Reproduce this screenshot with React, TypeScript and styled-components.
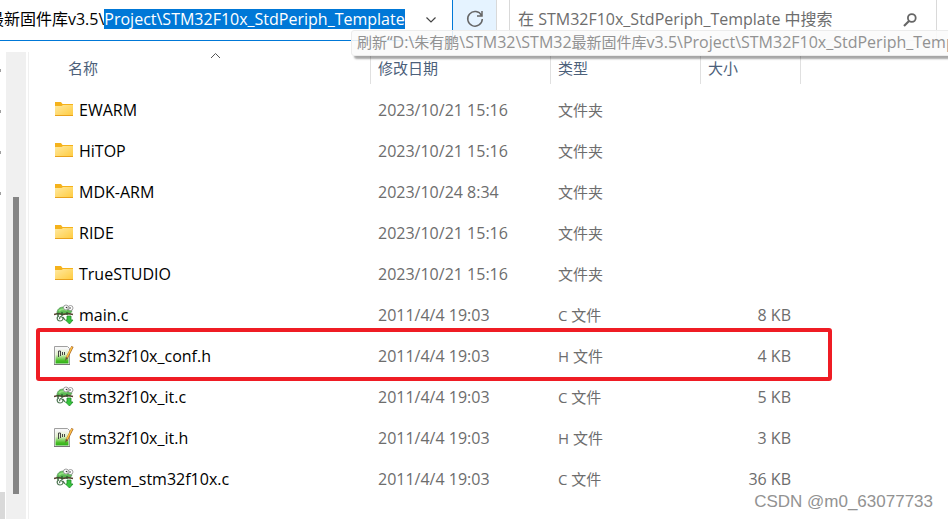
import React, { useLayoutEffect, useRef } from "react";
import styled, { createGlobalStyle } from "styled-components";

const GlobalStyle = createGlobalStyle`
  * { box-sizing: border-box; }
  body {
    margin: 0;
    background: #ffffff;
    overflow: hidden;
    font-family: "Open Sans", "Noto Sans CJK SC", sans-serif;
    font-size: 15px;
    line-height: 20px;
    color: #6d6d6d;
  }
`;

const Window = styled.div`
  position: relative;
  display: flex;
  flex-direction: column;
  min-height: 100vh;
  overflow: hidden;
`;

const Toolbar = styled.header`
  display: flex;
  height: 41px;
`;

const AddressBar = styled.div`
  display: flex;
  flex: 0 0 453px;
  border-right: 1px solid #0078d7;
  border-bottom: 1px solid #0078d7;
`;

const AddressInput = styled.input`
  flex: 0 0 405px;
  min-width: 0;
  padding: 0 0 2px;
  border: 0;
  outline: 0;
  background: transparent;
  color: #000000;
  font: inherit;
  font-size: 16px;
  &::selection { background: #0078d7; color: #ffffff; }
`;

const IconButton = styled.button`
  display: flex;
  align-items: center;
  justify-content: center;
  padding: 0;
  border: 0;
  background: transparent;
  color: #444444;
`;

const HistoryButton = styled(IconButton)`
  flex: 1;
  padding-left: 4px;
`;

const RefreshButton = styled(IconButton)`
  flex: 0 0 44px;
  padding-bottom: 4px;
  border-right: 1px solid #d9d9d9;
  background: #e5f3ff;
`;

const SearchBox = styled.form`
  display: flex;
  flex: 1;
  margin: 0 11px 0 12px;
  border: 1px solid #d9d9d9;
  border-top: 0;
`;

const SearchInput = styled.input`
  flex: 1;
  min-width: 0;
  padding: 0 8px 2px;
  border: 0;
  outline: 0;
  background: transparent;
  font: inherit;
  font-size: 16px;
  &::placeholder { color: #6d6d6d; opacity: 1; }
`;

const SearchButton = styled(IconButton)`
  flex: 0 0 52px;
`;

const Tooltip = styled.div`
  position: absolute;
  z-index: 2;
  top: 30px;
  left: 351px;
  padding: 1px 5px 3px;
  border: 1px solid #ececec;
  border-radius: 3px;
  background: rgba(250, 250, 250, 0.88);
  box-shadow: 3px 3px 2px rgba(0, 0, 0, 0.35);
  color: #929292;
  font-size: 16px;
  white-space: nowrap;
`;

const Han = styled.span`
  font-size: 15px;
`;

const Body = styled.div`
  display: flex;
  flex: 1;
  padding-top: 11px;
`;

const NavPane = styled.nav`
  display: flex;
  flex-direction: column;
  flex: 0 0 6px;
  gap: 38px;
  padding-top: 17px;
`;

const NavMark = styled.span`
  width: 1px;
  height: 3px;
  background: #a0a0a0;
`;

const NavItemEdge = styled.span`
  width: 5px;
  height: 27px;
  margin-top: auto;
  background: #d9d9d9;
`;

const ScrollTrack = styled.div`
  flex: 0 0 20px;
  padding: 145px 7px 25px;
  background: #f0f0f0;
`;

const ScrollThumb = styled.div`
  height: 100%;
  background: #858585;
`;

const FilePane = styled.main`
  flex: 1;
  min-width: 0;
  margin-left: 2px;
  border-left: 1px solid #f0f0f0;
`;

const FileTable = styled.table`
  width: 772px;
  table-layout: fixed;
  border-collapse: separate;
  border-spacing: 0;
`;

const Column = styled.col<{ $width?: number }>`
  width: ${({ $width }) => ($width ? `${$width}px` : "auto")};
`;

const HeaderCell = styled.th`
  height: 38px;
  padding: 0 0 6px;
  text-align: left;
  vertical-align: top;
  font-weight: 400;
  color: #4c607a;
`;

const HeaderLabel = styled.div<{ $first?: boolean }>`
  position: relative;
  height: 32px;
  padding: 6px 0 0 ${({ $first }) => ($first ? 39 : 7)}px;
  border-right: 1px solid #e0e0e0;
`;

const SortMark = styled.svg`
  position: absolute;
  top: 0;
  left: 181px;
`;

const Row = styled.tr`
  position: relative;
`;

const Marker = styled.span`
  position: absolute;
  top: -8px;
  left: 7px;
  width: 796px;
  height: 53px;
  border: 4px solid #ef1c24;
  border-radius: 3px;
  pointer-events: none;
`;

const Cell = styled.td`
  height: 41px;
  padding: 0 10px 2px 7px;
  white-space: nowrap;
`;

const DateCell = styled(Cell)`
  font-size: 16px;
`;

const SizeCell = styled(Cell)`
  text-align: right;
  font-size: 16px;
`;

const NameCell = styled(Cell)`
  padding: 0 0 2px 25px;
  color: #000000;
  font-size: 16px;
`;

const FileName = styled.div`
  display: flex;
  align-items: center;
  gap: 5px;
`;

const Watermark = styled.div`
  position: absolute;
  right: 15px;
  bottom: 7px;
  font-family: "Liberation Sans", sans-serif;
  font-size: 17px;
  color: #929292;
`;

const FolderIcon = () => (
  <svg width="20" height="22" viewBox="0 0 20 22" aria-hidden="true">
    <defs>
      <linearGradient id="folder" x1="0" y1="0" x2="1" y2="1">
        <stop offset="0" stopColor="#ffe9a0" />
        <stop offset="1" stopColor="#ffcb3d" />
      </linearGradient>
    </defs>
    <path d="M1 3h6l1.500 2H19v5H1z" fill="#f5b21b" />
    <path d="M1 7h6.500L9 6h10v11H1z" fill="url(#folder)" />
    <path d="M1 16h18v1H1z" fill="#e9a21d" />
  </svg>
);

const SourceIcon = () => (
  <svg width="20" height="22" viewBox="0 0 20 22" aria-hidden="true">
    <path d="M3 9C3 5 6 3 10 3c4 0 6 1 8 4l-2 3H3z" fill="#5dbb55" stroke="#5c9a5c" strokeWidth="0.800" />
    <path d="M5 7c2-2 5-2 8-1" stroke="#8fe07f" strokeWidth="2" fill="none" />
    <circle cx="12" cy="3.500" r="2.500" fill="#ffffff" stroke="#888888" strokeWidth="0.800" />
    <circle cx="16.500" cy="4" r="2.500" fill="#ffffff" stroke="#888888" strokeWidth="0.800" />
    <circle cx="12.500" cy="3.500" r="0.800" fill="#333333" />
    <circle cx="16" cy="4" r="0.800" fill="#333333" />
    <path d="M0 10.500l4-1 5 1 5-1 5 1" stroke="#57402f" strokeWidth="1.600" fill="none" />
    <path d="M4 9v3M8 8v4M13 8v3" stroke="#285c2d" strokeWidth="1.300" />
    <path d="M5 12c-3 1-2 5 1 5s4-3 2-4-3 1-2 2M9 13l2 3" stroke="#4c7550" strokeWidth="1.200" fill="none" />
    <path d="M13 12h4v4h2l-3.500 4-4-4H13z" fill="#36c53d" stroke="#218a2a" strokeWidth="0.800" />
  </svg>
);

const HeaderIcon = () => (
  <svg width="20" height="22" viewBox="0 0 20 22" aria-hidden="true">
    <defs>
      <linearGradient id="sheet" x1="0" y1="0" x2="0" y2="1">
        <stop offset="0" stopColor="#f6f6f6" />
        <stop offset="0.400" stopColor="#dff0c8" />
        <stop offset="0.800" stopColor="#4cc02a" />
        <stop offset="1" stopColor="#2cae16" />
      </linearGradient>
    </defs>
    <path d="M0.500 1.500h13l2 2v16h-15z" fill="#f7f7f7" stroke="#a0a0a0" />
    <path d="M1.500 3.500h13v15h-13z" fill="url(#sheet)" />
    <path d="M4.500 12V6h2v5M8.500 10V7M10.500 10V7" stroke="#444444" fill="none" />
    <path d="M0 19.500h16" stroke="#777777" />
    <path d="M18.500 1.500l-6 12" stroke="#a66523" strokeWidth="2.400" />
    <path d="M18 2l-5.500 11" stroke="#ffc247" strokeWidth="1.600" />
    <path d="M12 12l-1 4 3-3z" fill="#695038" />
  </svg>
);

type Kind = "folder" | "c" | "h";
const kinds: Record<Kind, { label: string; Icon: React.FC }> = {
  folder: { label: "文件夹", Icon: FolderIcon },
  c: { label: "C 文件", Icon: SourceIcon },
  h: { label: "H 文件", Icon: HeaderIcon },
};

const files: { name: string; date: string; kind: Kind; size?: string; marked?: boolean }[] = [
  { name: "EWARM", date: "2023/10/21 15:16", kind: "folder" },
  { name: "HiTOP", date: "2023/10/21 15:16", kind: "folder" },
  { name: "MDK-ARM", date: "2023/10/24 8:34", kind: "folder" },
  { name: "RIDE", date: "2023/10/21 15:16", kind: "folder" },
  { name: "TrueSTUDIO", date: "2023/10/21 15:16", kind: "folder" },
  { name: "main.c", date: "2011/4/4 19:03", kind: "c", size: "8 KB" },
  { name: "stm32f10x_conf.h", date: "2011/4/4 19:03", kind: "h", size: "4 KB", marked: true },
  { name: "stm32f10x_it.c", date: "2011/4/4 19:03", kind: "c", size: "5 KB" },
  { name: "stm32f10x_it.h", date: "2011/4/4 19:03", kind: "h", size: "3 KB" },
  { name: "system_stm32f10x.c", date: "2011/4/4 19:03", kind: "c", size: "36 KB" },
];

const base = "D:\\朱有鹏\\STM32\\STM32最新固件库v3.5\\";
const path = base + "Project\\STM32F10x_StdPeriph_Template";

// Chinese runs are set one step smaller than the Latin text around them.
const MixedText = ({ text }: { text: string }) => (
  <>
    {text
      .split(/([\u4e00-\u9fff]+)/)
      .map((run, i) => (i % 2 ? <Han key={i}>{run}</Han> : run))}
  </>
);

export default function App() {
  const address = useRef<HTMLInputElement>(null);

  useLayoutEffect(() => {
    const field = address.current;
    if (!field) return;
    field.focus();
    field.setSelectionRange(base.length, path.length);
    field.scrollLeft = field.scrollWidth;
  }, []);

  return (
    <Window>
      <GlobalStyle />
      <Toolbar>
        <AddressBar>
          <AddressInput ref={address} aria-label="地址" defaultValue={path} spellCheck={false} />
          <HistoryButton aria-label="历史记录">
            <svg width="12" height="8" viewBox="0 0 12 8" fill="none" stroke="currentColor" strokeWidth="1.200">
              <path d="M1.500 1.500L6 6l4.500-4.500" />
            </svg>
          </HistoryButton>
        </AddressBar>
        <RefreshButton aria-label="刷新">
          <svg width="18" height="18" viewBox="0 0 18 18" fill="none" stroke="#666666" strokeWidth="1.500">
            <path d="M15.500 5.500A7.300 7.300 0 1 0 16.300 9M16 1v5h-5" />
          </svg>
        </RefreshButton>
        <SearchBox>
          <SearchInput aria-label="搜索" placeholder="在 STM32F10x_StdPeriph_Template 中搜索" />
          <SearchButton type="button" aria-label="开始搜索">
            <svg width="14" height="14" viewBox="0 0 14 14" fill="none" stroke="#666666" strokeWidth="1.800">
              <circle cx="8.800" cy="5" r="3.900" />
              <path d="M6 8L1 13" strokeWidth="2.200" />
            </svg>
          </SearchButton>
        </SearchBox>
      </Toolbar>
      <Tooltip role="tooltip">
        <MixedText text={`刷新“${path}”`} />
      </Tooltip>
      <Body>
        <NavPane>
          <NavMark />
          <NavMark />
          <NavMark />
          <NavMark />
          <NavItemEdge />
        </NavPane>
        <ScrollTrack>
          <ScrollThumb />
        </ScrollTrack>
        <FilePane>
          <FileTable>
            <colgroup>
              <Column />
              <Column $width={180} />
              <Column $width={150} />
              <Column $width={100} />
            </colgroup>
            <thead>
              <tr>
                {["名称", "修改日期", "类型", "大小"].map((label, i) => (
                  <HeaderCell key={label} scope="col">
                    <HeaderLabel $first={i === 0}>
                      {label}
                      {i === 0 && (
                        <SortMark width="11" height="7" viewBox="0 0 11 7" fill="none" stroke="#555555">
                          <path d="M1 6l4.500-4.500L10 6" />
                        </SortMark>
                      )}
                    </HeaderLabel>
                  </HeaderCell>
                ))}
              </tr>
            </thead>
            <tbody>
              {files.map(({ name, date, kind, size, marked }) => {
                const { label, Icon } = kinds[kind];
                return (
                  <Row key={name}>
                    <NameCell>
                      <FileName>
                        <Icon />
                        {name}
                      </FileName>
                      {marked && <Marker />}
                    </NameCell>
                    <DateCell>{date}</DateCell>
                    <Cell>{label}</Cell>
                    <SizeCell>{size}</SizeCell>
                  </Row>
                );
              })}
            </tbody>
          </FileTable>
        </FilePane>
      </Body>
      <Watermark>CSDN @m0_63077733</Watermark>
    </Window>
  );
}
